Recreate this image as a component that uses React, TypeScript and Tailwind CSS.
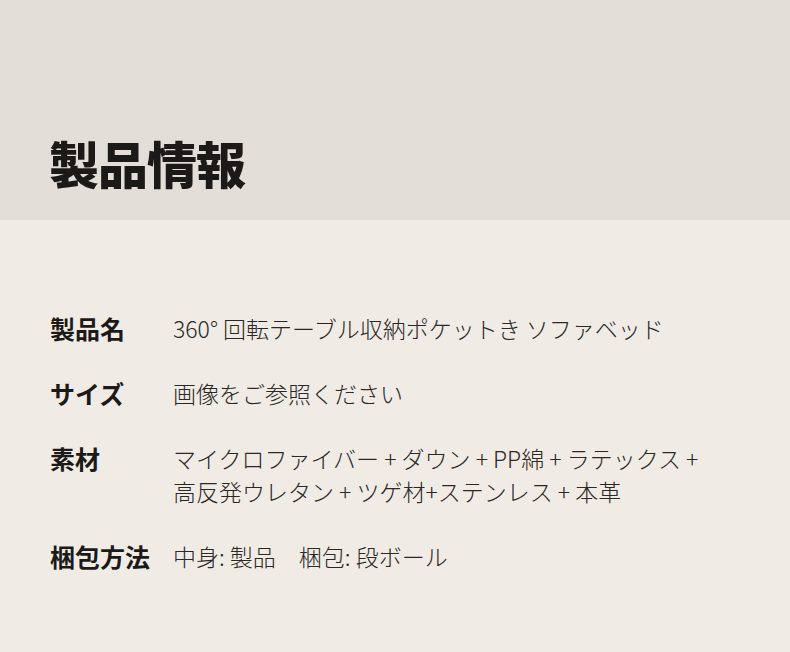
const rows: { label: string; lines: string[] }[] = [
  { label: '製品名', lines: ['360° 回転テーブル収納ポケットき ソファベッド'] },
  { label: 'サイズ', lines: ['画像をご参照ください'] },
  {
    label: '素材',
    lines: ['マイクロファイバー + ダウン + PP綿 + ラテックス +', '高反発ウレタン + ツゲ材+ステンレス + 本革'],
  },
  { label: '梱包方法', lines: ['中身: 製品\u3000梱包: 段ボール'] },
];

export default function App() {
  return (
    <div
      className="w-[790px] h-[652px] overflow-hidden bg-[#f0ece5] text-[#1c1a18]"
      style={{ fontFamily: '"Noto Sans CJK JP", "Noto Sans", sans-serif' }}
    >
      <header className="h-[220px] bg-gradient-to-b from-[#e2ded7] to-[#e3dfd8] flex items-end px-[49px] pb-[27px]">
        <h1 className="text-[50px] leading-[62px] font-black tracking-[-1px]">製品情報</h1>
      </header>
      <section className="px-[50px] pt-[92px] flex flex-col gap-[32px]">
        {rows.map((r) => (
          <div key={r.label} className="flex">
            <div className="w-[123px] shrink-0 text-[25px] leading-[33px] font-bold">{r.label}</div>
            <div className="text-[23px] leading-[33px] font-light text-[#2a2725]">
              {r.lines.map((l) => (
                <div key={l}>{l}</div>
              ))}
            </div>
          </div>
        ))}
      </section>
    </div>
  );
}
